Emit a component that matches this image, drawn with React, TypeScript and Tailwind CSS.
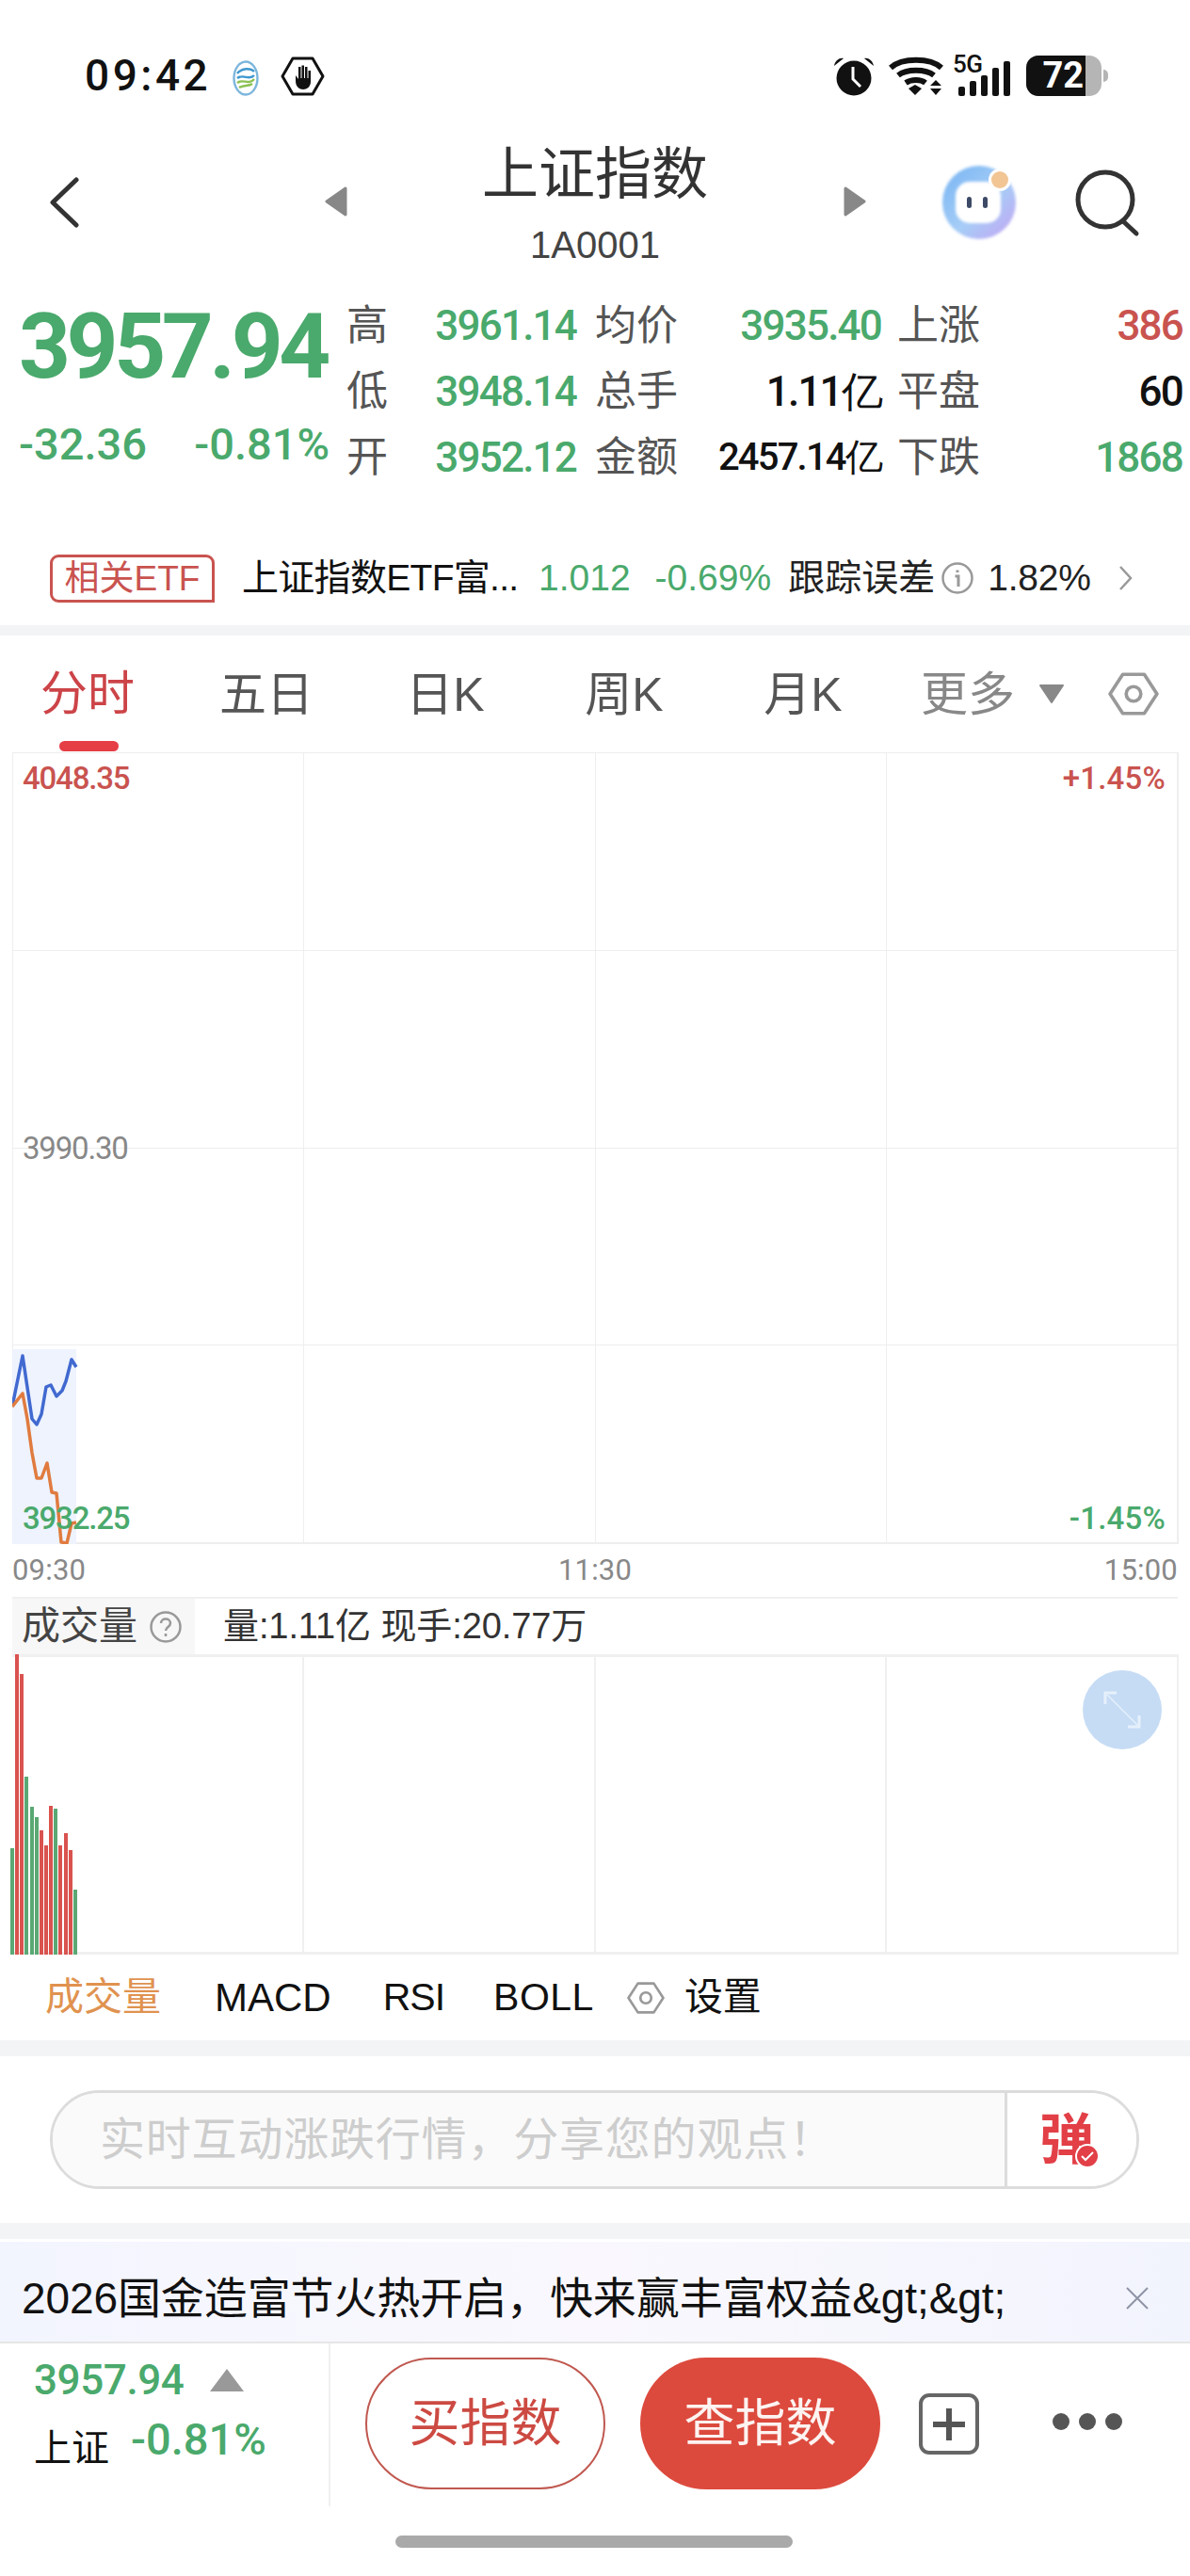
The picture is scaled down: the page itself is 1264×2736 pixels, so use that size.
const GREEN = "text-[#4aa96c]";
const NUM = "font-['Roboto',sans-serif] font-medium";

const volumeBars = [
  { h: 113, up: false },
  { h: 319, up: true },
  { h: 298, up: true },
  { h: 189, up: false },
  { h: 157, up: false },
  { h: 146, up: false },
  { h: 132, up: true },
  { h: 116, up: true },
  { h: 158, up: true },
  { h: 155, up: false },
  { h: 116, up: true },
  { h: 129, up: true },
  { h: 111, up: true },
  { h: 69, up: false },
];

const StatusBar = () => (
  <div className="h-[150px] flex items-start pt-[58px] pl-[90px] pr-[87px] text-[#111]">
    <span className="text-[46px] leading-[44px] font-medium tracking-[3.5px] w-[140px] font-['Roboto',sans-serif]">09:42</span>
    <svg className="ml-[17px] mt-[6px]" width="28" height="38" viewBox="0 0 28 38" fill="none" strokeWidth="2.4">
      <ellipse cx="14" cy="19" rx="12.5" ry="17.5" stroke="#7db6dc" />
      <path d="M5 14c5-6 14-6 18-2M5 19c6-5 13 3 18-3" stroke="#3f97cf" />
      <path d="M5 24c6-5 12 3 18-4M7 29c5-3 10-1 14-4" stroke="#8cc152" />
    </svg>
    <svg className="ml-[23px] mt-[2px]" width="47" height="42" viewBox="0 0 47 42" fill="none">
      <path d="M13 2h21l11 19-11 19H13L2 21z" stroke="#111" strokeWidth="3" strokeLinejoin="round" />
      <path d="M16 17v9c0 6 4 9 8 9s8-3 8-8V15h-2.500v8h-1V11h-2.500v12h-1V9.500h-2.500V23h-1V11h-2.500v13l-3-4z" fill="#111" />
    </svg>
    <svg className="ml-auto mt-[2px]" width="44" height="42" viewBox="0 0 44 42">
      <circle cx="22" cy="23" r="18.500" fill="#111" />
      <path d="M1 10c1-6 6-9 10-8zM43 10c-1-6-6-9-10-8z" fill="#111" />
      <path d="M21 11v13l8 8" fill="none" stroke="#fff" strokeWidth="3" />
    </svg>
    <svg className="ml-[15px] mt-[2px]" width="58" height="42" viewBox="0 0 58 42" fill="none" stroke="#111" strokeWidth="6">
      <path d="M2 12C14 1 44 1 56 12M10 20c9-7 29-7 38 0M18 28c6-4 16-4 21 0" />
      <path d="M21 34l7 7 7-7-7-4z" fill="#111" stroke="none" />
      <path d="M44 31l6-6 6 6zM44 34h12l-6 7z" fill="#111" stroke="none" />
    </svg>
    <div className="relative ml-[10px] mt-[2px] w-[72px] h-[42px]">
      <span className="absolute left-0 -top-[5px] text-[26px] leading-[26px] font-medium tracking-[-0.5px] font-['Roboto',sans-serif]">5G</span>
      <div className="absolute left-[6px] bottom-0 flex items-end gap-[5px]">
        <div className="w-[7px] h-[10px] bg-[#111] rounded-[2px]" />
        <div className="w-[7px] h-[16px] bg-[#111] rounded-[2px]" />
        <div className="w-[7px] h-[22px] bg-[#111] rounded-[2px]" />
        <div className="w-[7px] h-[30px] bg-[#111] rounded-[2px]" />
        <div className="w-[7px] h-[37px] bg-[#111] rounded-[2px]" />
      </div>
    </div>
    <div className="ml-[6px] mt-[1px] flex items-center">
      <div className="w-[80px] h-[43px] rounded-[13px] overflow-hidden flex bg-[#b5b5b5]">
        <div className="w-[63px] bg-[#111] text-white text-[38px] leading-[43px] font-bold text-right pr-[2px] font-['Roboto',sans-serif]">72</div>
      </div>
      <div className="ml-[2px] w-[5px] h-[13px] bg-[#b5b5b5] rounded-r-full" />
    </div>
  </div>
);

const Header = () => (
  <div className="h-[150px] flex items-start relative">
    <svg className="absolute left-[50px] top-[38px]" width="36" height="54" viewBox="0 0 36 54" fill="none">
      <path d="M31 3L6 27l25 24" stroke="#333" strokeWidth="5" strokeLinecap="round" strokeLinejoin="round" />
    </svg>
    <div className="w-full flex items-start justify-center">
      <svg className="mt-[48px]" width="24" height="32" viewBox="0 0 24 32">
        <path d="M22 2L2 16l20 14z" fill="#888" stroke="#888" strokeWidth="3" strokeLinejoin="round" />
      </svg>
      <div className="w-[527px] flex flex-col items-center text-[#333]">
        <span className="text-[60px] leading-[64px] mt-[4px]">上证指数</span>
        <span className="text-[40px] leading-[44px] mt-[20px] text-[#444]">1A0001</span>
      </div>
      <svg className="mt-[48px]" width="24" height="32" viewBox="0 0 24 32">
        <path d="M2 2l20 14L2 30z" fill="#888" stroke="#888" strokeWidth="3" strokeLinejoin="round" />
      </svg>
    </div>
    <svg className="absolute left-[998px] top-[23px]" width="84" height="84" viewBox="0 0 84 84">
      <defs>
        <linearGradient id="ring" x1="0" y1="0" x2="1" y2="1">
          <stop offset="0" stopColor="#76b4f2" />
          <stop offset="0.55" stopColor="#a6cdf7" />
          <stop offset="1" stopColor="#c5a3f2" />
        </linearGradient>
        <filter id="soft">
          <feGaussianBlur stdDeviation="1.500" />
        </filter>
      </defs>
      <circle cx="42" cy="42" r="39" fill="url(#ring)" filter="url(#soft)" />
      <rect x="17" y="20" width="48" height="44" rx="15" fill="#fff" filter="url(#soft)" />
      <rect x="29" y="36" width="5" height="12" rx="2.500" fill="#3c4a66" />
      <rect x="46" y="36" width="5" height="12" rx="2.500" fill="#3c4a66" />
      <circle cx="64" cy="18" r="12" fill="#fff" />
      <circle cx="64" cy="18" r="9" fill="#f2c594" />
    </svg>
    <svg className="absolute left-[1140px] top-[27px]" width="72" height="76" viewBox="0 0 72 76" fill="none">
      <circle cx="34" cy="35" r="29" stroke="#333" strokeWidth="5" />
      <path d="M53 58l14 13" stroke="#333" strokeWidth="5" strokeLinecap="round" />
    </svg>
  </div>
);

const QuoteRow = ({ a, b, c, d, e, f, dColor, fColor }: { a: string; b: string; c: string; d: string; e: string; f: string; dColor: string; fColor: string }) => (
  <div className="h-[70px] flex items-center text-[44px] leading-[70px]">
    <span className="w-[92px] text-[#555]">{a}</span>
    <span className={`w-[152px] text-right tracking-[-1.8px] ${NUM} ${GREEN}`}>{b}</span>
    <span className="ml-[20px] w-[88px] text-[#555]">{c}</span>
    <span className={`w-[216px] text-right tracking-[-1.8px] ${NUM} ${dColor}`}>{d}</span>
    <span className="ml-[17px] w-[89px] text-[#555]">{e}</span>
    <span className={`w-[214px] text-right tracking-[-1.8px] ${NUM} ${fColor}`}>{f}</span>
  </div>
);

const Quote = () => (
  <div className="flex h-[221px] pt-[11px]">
    <div className={`w-[368px] pl-[20px] ${GREEN}`}>
      <div className="text-[96px] leading-[116px] font-bold tracking-[-4.500px] -mt-[1px] whitespace-nowrap font-['Roboto',sans-serif]">3957.94</div>
      <div className={`w-[330px] flex justify-between text-[47px] leading-[50px] mt-[21px] ${NUM}`}>
        <span>-32.36</span>
        <span>-0.81%</span>
      </div>
    </div>
    <div>
      <QuoteRow a="高" b="3961.14" c="均价" d="3935.40" e="上涨" f="386" dColor={GREEN} fColor="text-[#c9534f]" />
      <QuoteRow a="低" b="3948.14" c="总手" d="1.11亿" e="平盘" f="60" dColor="text-[#111]" fColor="text-[#111]" />
      <QuoteRow a="开" b="3952.12" c="金额" d="2457.14亿" e="下跌" f="1868" dColor="text-[#111] text-[40px]" fColor={GREEN} />
    </div>
  </div>
);

const EtfRow = () => (
  <div className="h-[143px] box-border pt-[43px] flex items-center text-[39px] leading-[48px]">
    <span className="ml-[53px] w-[175px] h-[51px] box-border border-[3px] border-[#c9534f] rounded-[9px] rounded-br-none text-[#c9534f] text-[37px] leading-[45px] text-center">相关ETF</span>
    <span className="ml-[29px] text-[#111] w-[286px] tracking-[-0.7px] whitespace-nowrap">上证指数ETF富...</span>
    <span className={`ml-[29px] ${GREEN}`}>1.012</span>
    <span className={`ml-[26px] ${GREEN}`}>-0.69%</span>
    <span className="ml-[18px] text-[#222] whitespace-nowrap">跟踪误差</span>
    <svg className="ml-[6px]" width="36" height="36" viewBox="0 0 36 36" fill="none">
      <circle cx="18" cy="18" r="15.500" stroke="#999" strokeWidth="2.500" />
      <path d="M18 9.500v2.500M15.500 16H19v11" stroke="#999" strokeWidth="3" />
    </svg>
    <span className="ml-[14px] text-[#222] tracking-[-0.2px]">1.82%</span>
    <svg className="ml-[28px]" width="18" height="30" viewBox="0 0 18 30" fill="none">
      <path d="M3 3l11 12L3 27" stroke="#999" strokeWidth="2.500" />
    </svg>
  </div>
);

const Band = ({ h }: { h: string }) => <div className={`${h} bg-[#f3f4f6]`} />;

const Hex = ({ size, color }: { size: number; color: string }) => (
  <svg width={size} height={size} viewBox="0 0 52 52" fill="none">
    <path d="M15 6h22l13 20-13 20H15L2 26z" stroke={color} strokeWidth="3.500" strokeLinejoin="round" />
    <circle cx="26" cy="26" r="7.500" stroke={color} strokeWidth="3.500" />
  </svg>
);

const Tabs = () => (
  <div className="h-[124px] flex items-center -ml-[2px] text-[50px] text-[#555]">
    <div className="relative w-[190px] h-full flex items-center justify-center text-[#cc4448]">
      <span className="mt-[1px]">分时</span>
      <div className="absolute left-[65px] bottom-[1px] w-[63px] h-[11px] rounded-full bg-[#e53e45]" />
    </div>
    <div className="w-[190px] text-center mt-[3px]">五日</div>
    <div className="w-[190px] text-center mt-[3px]">日K</div>
    <div className="w-[190px] text-center mt-[3px]">周K</div>
    <div className="w-[190px] text-center mt-[3px]">月K</div>
    <div className="ml-[30px] mt-[3px] text-[#888]">更多</div>
    <svg className="ml-[24px]" width="30" height="24" viewBox="0 0 30 24">
      <path d="M3 3h24L15 21z" fill="#888" stroke="#888" strokeWidth="2" strokeLinejoin="round" />
    </svg>
    <div className="ml-[45px]">
      <Hex size={54} color="#999" />
    </div>
  </div>
);

const PriceChart = () => (
  <div className="ml-[13px] w-[1239px] relative">
    <div className="grid grid-cols-4 grid-rows-4 h-[841px] border border-[#eeeeee]">
      {Array.from({ length: 16 }).map((_, i) => (
        <div key={i} className="border-r border-b border-[#eeeeee]" />
      ))}
    </div>
    <svg className="absolute left-0 top-[630px]" width="90" height="211" viewBox="12 1429 90 211" fill="none">
      <rect x="12" y="1433" width="68" height="207" fill="#eef3fe" />
      <path d="M12 1494L23 1440 33 1507 38 1513 43 1502 48 1473 53 1471 59 1483 65 1477 69 1467 75 1444 80 1452" stroke="#4169d0" strokeWidth="3.500" strokeLinejoin="round" />
      <path d="M12 1494L23 1480 28 1507 33 1543 38 1570 43 1570 49 1554 54 1585 59 1586 64 1638 70 1639 75 1618 80 1617" stroke="#e07b3f" strokeWidth="3.500" strokeLinejoin="round" />
    </svg>
    <span className={`absolute left-[11px] top-[10px] text-[33px] leading-[36px] tracking-[-1.2px] text-[#c9534f] ${NUM}`}>4048.35</span>
    <span className={`absolute right-[14px] top-[10px] text-[33px] leading-[36px] tracking-[0.2px] text-[#c9534f] ${NUM}`}>+1.45%</span>
    <span className="absolute left-[11px] top-[403px] text-[33px] leading-[36px] tracking-[-1.2px] text-[#888] font-['Roboto',sans-serif]">3990.30</span>
    <span className={`absolute left-[11px] top-[796px] text-[33px] leading-[36px] tracking-[-1.2px] ${NUM} ${GREEN}`}>3932.25</span>
    <span className={`absolute right-[14px] top-[796px] text-[33px] leading-[36px] tracking-[0.2px] ${NUM} ${GREEN}`}>-1.45%</span>
  </div>
);

const VolumeChart = () => (
  <div className="ml-[13px] w-[1239px] relative">
    <div className="grid grid-cols-4 h-[319px] border-t-[3px] border-b-[3px] border-[#f0f0f0]">
      {Array.from({ length: 4 }).map((_, i) => (
        <div key={i} className="border-r-2 border-[#f0f0f0]" />
      ))}
    </div>
    <div className="absolute -left-[2px] bottom-0 flex items-end gap-[1.150px]">
      {volumeBars.map((bar, i) => (
        <div key={i} className={`w-[4px] ${bar.up ? "bg-[#d9534f]" : "bg-[#5aa873]"}`} style={{ height: bar.h }} />
      ))}
    </div>
    <div className="absolute right-[18px] top-[17px] w-[84px] h-[84px] rounded-full bg-[#c6dcf5] flex items-center justify-center">
      <svg width="42" height="42" viewBox="0 0 42 42" fill="none" stroke="#e6f0fb" strokeWidth="3">
        <path d="M3 15V3h12M39 27v12H27" />
        <path d="M5 5l32 32" strokeWidth="1.500" />
      </svg>
    </div>
  </div>
);

const App = () => (
  <div className="w-[1264px] h-[2736px] bg-white overflow-hidden font-['Liberation_Sans','Noto_Sans_CJK_SC',sans-serif]">
    <StatusBar />
    <Header />
    <Quote />
    <EtfRow />
    <Band h="h-[11px]" />
    <Tabs />
    <PriceChart />

    <div className="h-[58px] mx-[13px] flex items-center justify-between text-[31px] text-[#888] tracking-[0.2px] border-b-2 border-[#f0f0f0] font-['Roboto',sans-serif]">
      <span>09:30</span>
      <span>11:30</span>
      <span>15:00</span>
    </div>

    <div className="h-[59px] flex items-center ml-[13px]">
      <div className="w-[194px] h-full bg-[#f7f7f7] flex items-center pl-[10px]">
        <span className="text-[41px] text-[#444]">成交量</span>
        <svg className="ml-[12px]" width="36" height="36" viewBox="0 0 36 36" fill="none">
          <circle cx="18" cy="18" r="15.500" stroke="#999" strokeWidth="2.500" />
          <path d="M13 14c0-6 10-6 10 0 0 4-5 4-5 8M18 25v3" stroke="#999" strokeWidth="2.500" />
        </svg>
      </div>
      <span className="ml-[30px] text-[38px] tracking-[-0.1px] text-[#333] whitespace-nowrap">量:1.11亿 现手:20.77万</span>
    </div>

    <VolumeChart />

    <div className="h-[91px] flex items-center text-[41px] text-[#111]">
      <span className="ml-[48px] text-[#e0924f]">成交量</span>
      <span className="ml-[57px] text-[42px]">MACD</span>
      <span className="ml-[55px] tracking-[-1px]">RSI</span>
      <span className="ml-[52px] tracking-[0.5px]">BOLL</span>
      <span className="ml-[35px]">
        <Hex size={40} color="#999" />
      </span>
      <span className="ml-[21px]">设置</span>
    </div>

    <Band h="h-[17px]" />

    <div className="h-[177px] flex items-center px-[53px]">
      <div className="w-[1157px] h-[105px] flex rounded-full border-[3px] border-[#dcdcdc] overflow-hidden">
        <div className="w-[1014px] bg-[#fafafa] border-r-[3px] border-[#dcdcdc] pl-[50px] flex items-center text-[48px] tracking-[0.8px] text-[#cdcdcd] whitespace-nowrap">
          实时互动涨跌行情，分享您的观点！
        </div>
        <div className="flex-1 flex items-center pl-[34px] bg-white">
          <div className="relative w-[64px] h-[62px] text-[58px] leading-[62px] font-bold text-[#e23f47]">
            弹
            <div className="absolute right-[0px] bottom-[1px] w-[26px] h-[26px] rounded-full bg-[#e23f47] border-2 border-white flex items-center justify-center">
              <svg width="16" height="12" viewBox="0 0 16 12" fill="none">
                <path d="M2 6l4 4 8-8" stroke="#fff" strokeWidth="2" />
              </svg>
            </div>
          </div>
        </div>
      </div>
    </div>

    <Band h="h-[17px]" />

    <div className="mt-[3px] h-[106px] box-border pt-[14px] flex items-center justify-between pl-[23px] pr-[44px] bg-gradient-to-r from-[#f3f5fe] via-[#faf8fe] to-[#f2f4fd]">
      <span className="text-[46px] text-[#111] tracking-[-0.1px] whitespace-nowrap">{"2026国金造富节火热开启，快来赢丰富权益&gt;&gt;"}</span>
      <svg width="24" height="24" viewBox="0 0 24 24" fill="none">
        <path d="M1 1l22 22M23 1L1 23" stroke="#8e93a6" strokeWidth="2" />
      </svg>
    </div>

    <div className="h-[175px] flex border-t-2 border-[#e6e6e6]">
      <div className="w-[351px] box-border border-r-2 border-[#f0f0f0] pl-[36px] pt-[14px]">
        <div className="flex items-center h-[50px]">
          <span className={`text-[44px] ${NUM} tracking-[-0.4px] ${GREEN}`}>3957.94</span>
          <svg className="ml-[28px]" width="36" height="24" viewBox="0 0 36 24">
            <path d="M18 0l18 24H0z" fill="#999" />
          </svg>
        </div>
        <div className="flex items-end mt-[18px]">
          <span className="text-[40px] leading-[50px] text-[#111]">上证</span>
          <span className={`ml-[23px] text-[47px] leading-[54px] ${NUM} -translate-y-[7px] ${GREEN}`}>-0.81%</span>
        </div>
      </div>
      <div className="flex items-start pt-[15px]">
        <div className="ml-[37px] w-[255px] h-[140px] box-border rounded-[70px] border-2 border-[#c0584f] flex items-center justify-center text-[54px] text-[#cc4a42]">买指数</div>
        <div className="ml-[37px] w-[255px] h-[140px] rounded-[70px] bg-[#dc4a3d] flex items-center justify-center text-[54px] text-[#fdf3f1]">查指数</div>
        <div className="ml-[41px] mt-[38px] w-[64px] h-[65px] box-border rounded-[11px] border-4 border-[#666] flex items-center justify-center">
          <svg width="38" height="38" viewBox="0 0 38 38">
            <path d="M19 2v34M2 19h34" stroke="#555" strokeWidth="6" />
          </svg>
        </div>
        <div className="ml-[78px] mt-[59px] flex gap-[10px]">
          <div className="w-[18px] h-[18px] rounded-full bg-[#555]" />
          <div className="w-[18px] h-[18px] rounded-full bg-[#555]" />
          <div className="w-[18px] h-[18px] rounded-full bg-[#555]" />
        </div>
      </div>
    </div>

    <div className="mt-[31px] ml-[420px] w-[422px] h-[13px] rounded-full bg-[#a9a9a9]" />
  </div>
);

export default App;
